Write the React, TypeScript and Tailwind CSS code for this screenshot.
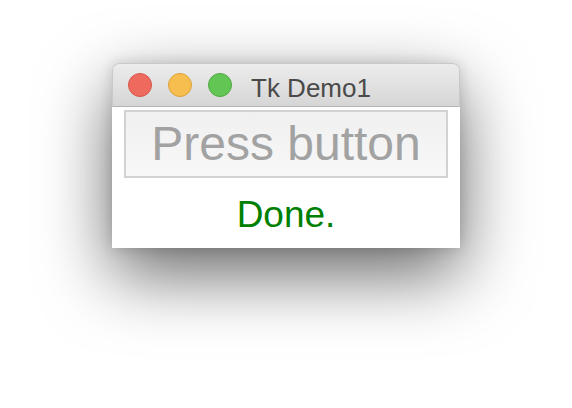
export default function App() {
  return (
    <div className="w-[572px] h-[408px] bg-white pl-[112px] pt-[63px] font-['Liberation_Sans',Arial,sans-serif]">
      <div className="w-[348px] h-[185px] flex flex-col rounded-t-[7px] bg-white shadow-[0_26px_70px_rgba(0,0,0,0.6),0_0_14px_rgba(0,0,0,0.15)]">
        <div className="h-[44px] flex items-start rounded-t-[7px] border border-[#c9c9c9] border-b-[#b4b4b4] bg-gradient-to-b from-[#ececec] to-[#d6d6d6] pl-[15px]">
          <div className="flex gap-[16px] mt-[9px]">
            <span className="w-[24px] h-[24px] rounded-full bg-[#ee6a5e] border border-[#d6564b]" />
            <span className="w-[24px] h-[24px] rounded-full bg-[#f6be4f] border border-[#dca23a]" />
            <span className="w-[24px] h-[24px] rounded-full bg-[#62c655] border border-[#4fa943]" />
          </div>
          <span className="ml-[19px] mt-[11px] text-[26px] leading-[26px] text-[#4a4a4a]">Tk Demo1</span>
        </div>
        <div className="flex-1 flex flex-col items-center px-[12px] pt-[3px]">
          <button className="w-full h-[68px] border-2 border-[#d2d2d2] bg-gradient-to-b from-[#f0f0f0] to-[#f8f8f8] text-[48px] leading-[64px] text-[#a2a2a2]">
            Press button
          </button>
          <div className="mt-[18px] text-[37px] leading-[37px] text-[#008000]">Done.</div>
        </div>
      </div>
    </div>
  );
}
